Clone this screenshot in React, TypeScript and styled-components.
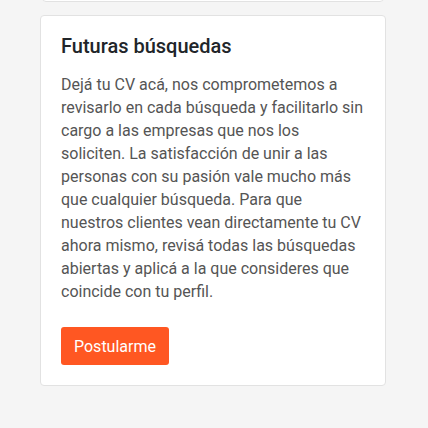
import React from "react";
import styled, { createGlobalStyle } from "styled-components";

const Global = createGlobalStyle`
  html, body { margin: 0; padding: 0; background: #f5f5f5; }
  body { font-family: Roboto, "Noto Sans", Arial, sans-serif; }
`;

const Page = styled.div`
  width: 428px;
  height: 428px;
  overflow: hidden;
  display: flex;
  flex-direction: column;
  align-items: flex-start;
  gap: 13px;
  padding-left: 40px;
  box-sizing: border-box;
`;

const PrevCard = styled.div`
  width: 342px;
  height: 20px;
  margin-top: -18px;
  margin-left: 2px;
  background: #fff;
  border: 1px solid #e2e2e2;
  border-radius: 4px;
  box-sizing: border-box;
`;

const Card = styled.section`
  width: 346px;
  box-sizing: border-box;
  background: #fff;
  border: 1px solid #e2e2e2;
  border-radius: 4px;
  padding: 20px;
`;

const Title = styled.h2`
  margin: 0 0 17px;
  font-size: 20px;
  font-weight: 500;
  line-height: 20px;
  color: #212529;
`;

const Body = styled.p`
  margin: 0 0 24px;
  font-size: 16px;
  line-height: 23px;
  color: #555;
`;

const Button = styled.button`
  display: inline-flex;
  align-items: center;
  justify-content: center;
  height: 38px;
  padding: 0 13px;
  background: #ff5722;
  color: #fff;
  border: none;
  border-radius: 3px;
  font-family: Roboto, Arial, sans-serif;
  font-size: 16px;
  cursor: pointer;
`;

export default function App() {
  return (
    <>
      <Global />
      <Page>
        <PrevCard />
        <Card>
          <Title>Futuras búsquedas</Title>
          <Body>
            Dejá tu CV acá, nos comprometemos a revisarlo en cada búsqueda y
            facilitarlo sin cargo a las empresas que nos los soliciten. La
            satisfacción de unir a las personas con su pasión vale mucho más que
            cualquier búsqueda. Para que nuestros clientes vean directamente tu
            CV ahora mismo, revisá todas las búsquedas abiertas y aplicá a la que
            consideres que coincide con tu perfil.
          </Body>
          <Button>Postularme</Button>
        </Card>
      </Page>
    </>
  );
}
